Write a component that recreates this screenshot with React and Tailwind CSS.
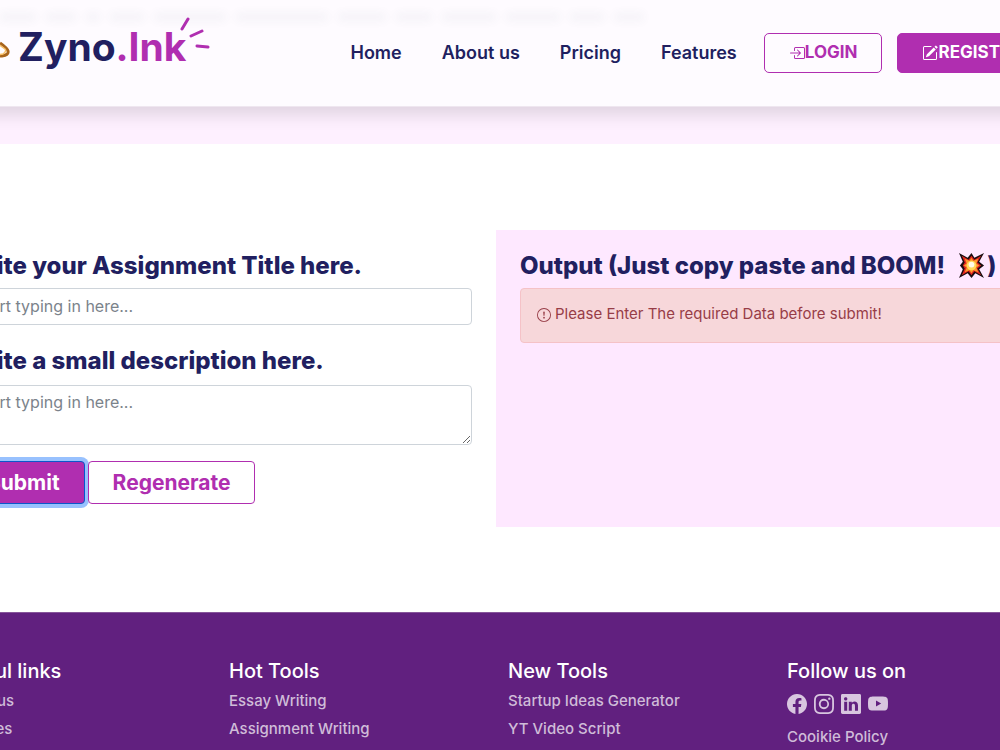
import React from "react";
import {
  BsBoxArrowInRight,
  BsPencilSquare,
  BsExclamationCircle,
  BsFacebook,
  BsInstagram,
  BsLinkedin,
  BsYoutube,
} from "react-icons/bs";

const navLinks = ["Home", "About us", "Pricing", "Features"];

const footerColumns = [
  { title: "Useful links", links: ["About us", "Features"] },
  { title: "Hot Tools", links: ["Essay Writing", "Assignment Writing"] },
  { title: "New Tools", links: ["Startup Ideas Generator", "YT Video Script"] },
];

const socials = [
  { name: "Facebook", Icon: BsFacebook },
  { name: "Instagram", Icon: BsInstagram },
  { name: "LinkedIn", Icon: BsLinkedin },
  { name: "YouTube", Icon: BsYoutube },
];

const wordWidths = [36, 30, 14, 34, 72, 92, 48, 36, 54, 54, 34, 30];

const Logo = () => (
  <a href="#" className="flex shrink-0 items-center pb-3" aria-label="Zyno.Ink">
    <svg width="18" height="60" viewBox="0 0 18 60" fill="none" aria-hidden="true">
      <path d="M-8 39 L2 39 Q9 38 8 34 Q7 31 0 26" stroke="#a8641c" strokeWidth="3" strokeLinejoin="round" />
      <path d="M-2 27 L5 32 Q7 34 3 37 L-4 38" stroke="#f6bd63" strokeWidth="1.5" />
    </svg>
    <span className="text-[39px] leading-[60px] font-bold text-[#211f60]">
      Zyno<span className="text-[#b02eb0]">.Ink</span>
    </span>
    <svg className="-ml-2 -mt-6" width="32" height="36" viewBox="0 0 32 36" fill="none" stroke="#b02eb0" strokeWidth="3" strokeLinecap="round" aria-hidden="true">
      <path d="M4 12 L10 2 M13 19 L24 14 M19 29 L30 30" />
    </svg>
  </a>
);

const Boom = () => (
  <svg className="mr-0.5 ml-2 inline-block align-[-5px]" width="27" height="27" viewBox="0 0 28 28" role="img" aria-label="Boom">
    <path d="M1 1 L10 6 L14 1 L17 6 L27 1 L22 10 L27 14 L22 18 L27 27 L18 22 L14 27 L10 22 L1 27 L5 18 L2 14 L5 10 Z" fill="#1a0d10" />
    <path d="M4 4 L11 8 L14 4 L17 8 L24 4 L20 11 L24 14 L20 17 L24 24 L17 20 L14 24 L11 20 L4 24 L7 17 L5 14 L7 11 Z" fill="#e5261f" />
    <path d="M7 7 L12 9 L14 6 L16 9 L21 7 L19 12 L22 14 L19 16 L21 21 L16 19 L14 22 L12 19 L7 21 L9 16 L6 14 L9 12 Z" fill="#fb9a2c" />
    <circle cx="14" cy="14" r="5" fill="#ffd95a" />
    <circle cx="14" cy="13" r="3" fill="#fffbe8" />
  </svg>
);

const Header = () => (
  <header className="relative -mx-6 border-b border-[#efe6f0] bg-[#fefbff] px-6 shadow-[0_8px_16px_rgba(0,0,0,0.12)]">
    <div className="absolute left-6 top-3 flex gap-2.5 opacity-4 blur-xs" aria-hidden="true">
      {wordWidths.map((width, i) => (
        <span key={i} className="h-2.5 bg-slate-600" style={{ width }} />
      ))}
    </div>
    <div className="relative flex h-[106px] items-center">
      <Logo />
      <nav className="ml-[140px] flex shrink-0 items-center gap-10 text-lg font-semibold text-[#211f60]">
        {navLinks.map((link) => (
          <a key={link} href="#">{link}</a>
        ))}
      </nav>
      <div className="ml-[27px] flex shrink-0 gap-[15px] text-[17px] font-bold">
        <button className="flex h-10 items-center rounded-[5px] border border-[#b02eb0] px-6 text-[#b02eb0]">
          <BsBoxArrowInRight size={16} />
          LOGIN
        </button>
        <button className="flex h-10 items-center rounded-[5px] border border-[#b02eb0] bg-[#b02eb0] px-6 text-white">
          <BsPencilSquare size={16} />
          REGISTER
        </button>
      </div>
    </div>
  </header>
);

const AssignmentForm = () => (
  <form className="w-1/2 px-6 pt-5" onSubmit={(e) => e.preventDefault()}>
    <label htmlFor="title" className="block text-2xl leading-8 font-extrabold whitespace-nowrap text-[#211f60]">
      Write your Assignment Title here.
    </label>
    <input
      id="title"
      type="text"
      placeholder="Start typing in here..."
      className="mt-1.5 block h-[37px] w-full rounded border border-[#ced4da] bg-white px-3 pb-0.5 text-base placeholder:text-[#7b838b]"
    />
    <label htmlFor="description" className="mt-5 block text-2xl leading-8 font-extrabold whitespace-nowrap text-[#211f60]">
      Write a small description here.
    </label>
    <textarea
      id="description"
      placeholder="Start typing in here..."
      className="mt-2 block h-[60px] w-full rounded border border-[#ced4da] bg-white px-3 py-1 text-base placeholder:text-[#7b838b]"
    />
    <div className="mt-4 flex gap-[3px] text-[21px] font-bold">
      <button type="submit" className="h-[43px] rounded border border-[#0a58ca] bg-[#b02eb0] px-6 text-white ring-4 ring-[#98c1fe]">
        Submit
      </button>
      <button type="button" className="h-[43px] rounded border border-[#b02eb0] bg-white px-6 text-[#b02eb0]">
        Regenerate
      </button>
    </div>
  </form>
);

const OutputPanel = () => (
  <section className="w-1/2 bg-[#fee8ff] px-6 pt-5">
    <h2 className="text-2xl leading-8 font-extrabold whitespace-nowrap text-[#211f60]">
      Output (Just copy paste and BOOM! <Boom />)
    </h2>
    <div role="alert" className="mt-1.5 flex h-[55px] items-center gap-1 rounded border border-[#f5c2c7] bg-[#f7d7da] px-4 pb-0.5 text-[15px] text-[#973d47]">
      <BsExclamationCircle size={14} />
      Please Enter The required Data before submit!
    </div>
  </section>
);

const Footer = () => (
  <footer className="flex-1 border-t border-[#86559a] bg-[#61207f] pt-[46px] text-white">
    <div className="-mr-[54px] -ml-[62px] grid grid-cols-4">
      {footerColumns.map((column) => (
        <div key={column.title} className="px-3">
          <h3 className="text-xl leading-6 font-medium">{column.title}</h3>
          <ul className="mt-1 text-[15px] leading-7 font-medium text-[#cfbcd8]">
            {column.links.map((link) => (
              <li key={link}><a href="#">{link}</a></li>
            ))}
          </ul>
        </div>
      ))}
      <div className="px-3">
        <h3 className="text-xl leading-6 font-medium">Follow us on</h3>
        <div className="mt-[11px] flex gap-[7px] text-[#d8c6df]">
          {socials.map(({ name, Icon }) => (
            <a key={name} href="#" aria-label={name}><Icon size={20} /></a>
          ))}
        </div>
        <a href="#" className="mt-[9px] block text-[15px] leading-7 font-medium text-[#cfbcd8]">Cooikie Policy</a>
      </div>
    </div>
  </footer>
);

const App = () => {
  return (
    <div className="flex min-h-screen flex-col overflow-hidden bg-white font-['Inter',sans-serif]">
      <div className="bg-[#fef0ff] pb-[37px]">
        <Header />
      </div>
      <main className="pt-[86px] pb-[85px]">
        <div className="-mr-[54px] -ml-[62px] flex min-h-[297px]">
          <AssignmentForm />
          <OutputPanel />
        </div>
      </main>
      <Footer />
    </div>
  );
};

export default App;
